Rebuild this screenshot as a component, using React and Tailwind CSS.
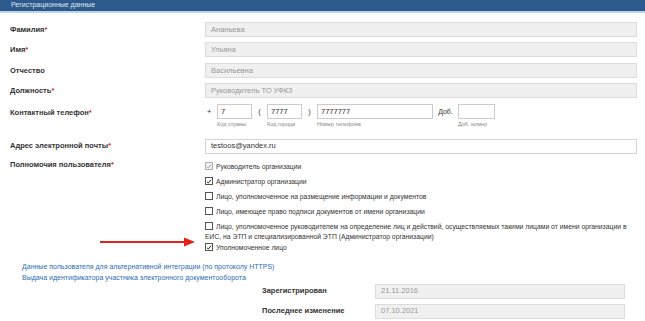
import React from 'react';

const font = { fontFamily: '"Liberation Sans", Arial, sans-serif' };

function Req() {
  return <span className="text-[#e02020]">*</span>;
}

function TextRow({ label, required, value }) {
  return (
    <div className="flex items-center h-[20.5px]">
      <div className="w-[205px] pl-[10px] text-[7.5px] font-bold text-[#333]">
        {label}
        {required && <Req />}
      </div>
      <div className="w-[432px] h-[15px] bg-[#f0f0f0] border border-[#dcdcdc] px-[5px] flex items-center text-[7.5px] text-[#999]">
        {value}
      </div>
    </div>
  );
}

function Box({ checked, disabled }) {
  return (
    <span
      className={`inline-flex items-center justify-center w-[8px] h-[8px] border shrink-0 mr-[3px] ${
        disabled ? 'border-[#b0b0b0] bg-[#f4f4f4]' : 'border-[#555] bg-white'
      }`}>
      {checked && (
        <svg viewBox="0 0 8 8" className="w-[7px] h-[7px]">
          <path
            d="M1.2 4.2 L3.1 6 L6.8 1.6"
            fill="none"
            stroke={disabled ? '#999' : '#222'}
            strokeWidth="1.3"
          />
        </svg>
      )}
    </span>
  );
}

function Check({ checked, disabled, children }) {
  return (
    <div className="flex items-start text-[6.8px] text-[#333] leading-[10px] mb-[5px]">
      <Box checked={checked} disabled={disabled} />
      <span>{children}</span>
    </div>
  );
}

function SmallInput({ w, value }) {
  return (
    <div
      className={`${w} h-[15px] border border-[#ccc] bg-white px-[3px] flex items-center text-[7.5px] text-[#333]`}>
      {value}
    </div>
  );
}

export default function App() {
  return (
    <div className="relative w-[645px] h-[321px] bg-white overflow-hidden" style={font}>
      <div className="h-[13px] bg-[#2c5a8c] border-b-[2px] border-[#bcd6ef] flex items-center pl-[11px] text-[7px] text-[#dfe8f3]">
        Регистрационные данные
      </div>

      <div className="pt-[6px]">
        <TextRow label="Фамилия" required value="Ананьева" />
        <TextRow label="Имя" required value="Ульяна" />
        <TextRow label="Отчество" value="Васильевна" />
        <TextRow label="Должность" required value="Руководитель ТО УФКЗ" />

        <div className="flex h-[35px] pt-[3px]">
          <div className="w-[205px] pl-[10px] pt-[3px] text-[7.5px] font-bold text-[#333]">
            Контактный телефон
            <Req />
          </div>
          <div className="flex items-start text-[7.5px] text-[#333]">
            <span className="w-[12px] leading-[15px] pl-[2px]">+</span>
            <div>
              <SmallInput w="w-[35px]" value="7" />
              <div className="text-[5.5px] text-[#888] mt-[1px]">Код страны</div>
            </div>
            <span className="w-[15px] text-center leading-[15px]">(</span>
            <div>
              <SmallInput w="w-[35px]" value="7777" />
              <div className="text-[5.5px] text-[#888] mt-[1px]">Код города</div>
            </div>
            <span className="w-[15px] text-center leading-[15px]">)</span>
            <div>
              <SmallInput w="w-[116px]" value="7777777" />
              <div className="text-[5.5px] text-[#888] mt-[1px]">Номер телефона</div>
            </div>
            <span className="w-[25px] text-center leading-[15px] text-[7px]">Доб.</span>
            <div>
              <SmallInput w="w-[37px]" value="" />
              <div className="text-[5.5px] text-[#888] mt-[1px]">Доб. номер</div>
            </div>
          </div>
        </div>

        <div className="flex items-center h-[20px]">
          <div className="w-[205px] pl-[10px] text-[7.5px] font-bold text-[#333]">
            Адрес электронной почты
            <Req />
          </div>
          <div className="w-[432px] h-[15px] border border-[#d4d4d4] bg-white px-[5px] flex items-center text-[7.5px] text-[#333]">
            testoos@yandex.ru
          </div>
        </div>

        <div className="flex pt-[3px]">
          <div className="w-[205px] pl-[10px] text-[7.5px] font-bold text-[#333]">
            Полномочия пользователя
            <Req />
          </div>
          <div className="w-[428px] pt-[3px]">
            <Check checked disabled>Руководитель организации</Check>
            <Check checked>Администратор организации</Check>
            <Check>Лицо, уполномоченное на размещение информации и документов</Check>
            <Check>Лицо, имеющее право подписи документов от имени организации</Check>
            <div className="text-[6.8px] text-[#333] leading-[10px] mb-[1px]">
              <span className="inline-flex align-[-1px]">
                <Box />
              </span>
              Лицо, уполномоченное руководителем на определение лиц и действий, осуществляемых такими лицами от имени организации в ЕИС, на ЭТП и специализированной ЭТП (Администратор организации)
            </div>
            <Check checked>Уполномоченное лицо</Check>
          </div>
        </div>

        <div className="pl-[22px] pt-[3px] text-[7px] leading-[11px] text-[#2b6cb5]">
          <div>Данные пользователя для альтернативной интеграции (по протоколу HTTPS)</div>
          <div>Выдача идентификатора участника электронного документооборота</div>
        </div>

        <div className="pl-[262px] -mt-[2px]">
          <div className="flex items-center h-[20px]">
            <div className="w-[113px] text-[7.5px] font-bold text-[#333]">Зарегистрирован</div>
            <div className="w-[250px] h-[15px] bg-[#f0f0f0] border border-[#dcdcdc] px-[5px] flex items-center text-[7.5px] text-[#999]">
              21.11.2016
            </div>
          </div>
          <div className="flex items-center h-[20px]">
            <div className="w-[113px] text-[7.5px] font-bold text-[#333]">Последнее изменение</div>
            <div className="w-[250px] h-[15px] bg-[#f0f0f0] border border-[#dcdcdc] px-[5px] flex items-center text-[7.5px] text-[#999]">
              07.10.2021
            </div>
          </div>
        </div>
      </div>

      <svg className="absolute left-[98px] top-[236px]" width="100" height="12" viewBox="0 0 100 12">
        <line x1="2" y1="6" x2="88" y2="6" stroke="#e2231a" strokeWidth="2" />
        <path d="M86 1.5 L97 6 L86 10.5 Z" fill="#e2231a" />
      </svg>
    </div>
  );
}
